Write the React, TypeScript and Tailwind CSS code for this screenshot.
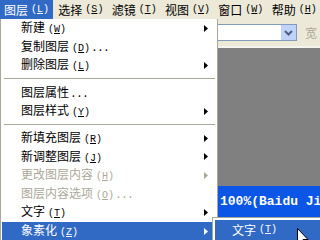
import React from 'react';

type Item = { label: string; key?: string; tail?: string; arrow?: boolean; disabled?: boolean; active?: boolean } | 'sep';

const items: Item[] = [
  { label: '新建', key: 'W', arrow: true },
  { label: '复制图层', key: 'D', tail: ' . . .' },
  { label: '删除图层', key: 'L', arrow: true },
  'sep',
  { label: '图层属性', tail: ' . . .' },
  { label: '图层样式', key: 'Y', arrow: true },
  'sep',
  { label: '新填充图层', key: 'R', arrow: true },
  { label: '新调整图层', key: 'J', arrow: true },
  { label: '更改图层内容', key: 'H', arrow: true, disabled: true },
  { label: '图层内容选项', key: 'O', tail: ' . . .', disabled: true },
  { label: '文字', key: 'T', arrow: true },
  { label: '象素化', key: 'Z', arrow: true, active: true },
];

const menus: [string, string][] = [
  ['图层', 'L'],
  ['选择', 'S'],
  ['滤镜', 'T'],
  ['视图', 'V'],
  ['窗口', 'W'],
  ['帮助', 'H'],
];

const mono = { fontFamily: '"Liberation Mono", monospace' };

// "(X)" part of a label, with the access letter underlined
const Key = ({ k }: { k: string }) => (
  <span className="ml-[3px] text-[10px]" style={mono}>
    (<u>{k}</u>)
  </span>
);

const Arrow = ({ color }: { color: string }) => (
  <svg width="4" height="7" viewBox="0 0 4 7" className="block">
    <polygon points="0,0 4,3.5 0,7" fill={color} />
  </svg>
);

const App: React.FC = () => {
  return (
    <div
      className="relative w-[320px] h-[240px] overflow-hidden bg-[#ece9d8] text-[12px] leading-none text-black flex flex-col"
      style={{ fontFamily: '"Noto Sans CJK SC", "Noto Sans", sans-serif' }}
    >
      {/* menu bar */}
      <div className="flex h-[19px] shrink-0">
        {menus.map(([name, k], i) => (
          <div
            key={name}
            className={`w-[54px] flex items-center whitespace-nowrap ${i === 0 ? 'pl-[4px] bg-[#316ac5] text-white' : 'pl-[5px]'}`}
          >
            {name}
            <Key k={k} />
          </div>
        ))}
      </div>

      {/* toolbar */}
      <div className="h-[29px] shrink-0 flex items-center justify-end border-b-2 border-[#f4f3ee] pr-[2px]">
        <div className="w-[120px] h-[17px] bg-white border border-[#7f9db9] flex items-center justify-between">
          <span className="pl-[12px]">常</span>
          <div className="w-[15px] h-[15px] bg-[#c1d3fb] flex items-center justify-center">
            <svg width="9" height="6" viewBox="0 0 9 6">
              <path d="M1 1 L4.5 4.5 L8 1" stroke="#4d6185" strokeWidth="2" fill="none" />
            </svg>
          </div>
        </div>
        <span className="ml-[8px] mr-[1px] text-[#aca899]">宽</span>
      </div>

      {/* workspace */}
      <div className="flex-1 bg-[#808080] flex flex-col justify-end">
        <div className="h-[54px] bg-[#0b56e6] pl-[220px] pt-[8px]">
          <span className="text-white font-bold text-[13px] whitespace-nowrap" style={mono}>
            100%(Baidu Ji
          </span>
        </div>
      </div>

      {/* layer menu */}
      <div className="absolute left-0 top-[19px] w-[218px] h-[230px] bg-white border-l border-r border-[#aca899] shadow-[-1px_0_0_#f4f3ee]">
        {items.map((it, i) =>
          it === 'sep' ? (
            <div key={i} className="h-[8.4px] flex items-center pl-[3px] pr-[2px]">
              <div className="h-px w-full bg-[#aca899]" />
            </div>
          ) : (
            <div
              key={i}
              className={`h-[18.6px] flex items-center pl-[19px] pr-[8px] mx-[1px] ${
                it.active ? 'bg-[#316ac5] text-white' : it.disabled ? 'text-[#aca899]' : ''
              }`}
            >
              <span className="flex-1 whitespace-nowrap">
                {it.label}
                {it.key && <Key k={it.key} />}
                {it.tail}
              </span>
              {it.arrow && <Arrow color={it.active ? '#ffffff' : it.disabled ? '#aca899' : '#000000'} />}
            </div>
          )
        )}
      </div>

      {/* submenu */}
      <div className="absolute left-[212px] top-[217px] w-[120px] h-[30px] bg-white border border-[#aca899] p-[2px]">
        <div className="h-[20px] bg-[#316ac5] text-white flex items-center pl-[17px] whitespace-nowrap">
          文字
          <Key k="T" />
        </div>
      </div>

      {/* cursor */}
      <svg className="absolute left-[297px] top-[228px]" width="12" height="19" viewBox="0 0 12 19">
        <path d="M0.5 0.5 L0.5 16 L4 12.5 L6.5 18 L8.5 17 L6 11.5 L11 11.5 Z" fill="#ffffff" stroke="#000000" strokeWidth="1" />
      </svg>
    </div>
  );
};

export default App;
